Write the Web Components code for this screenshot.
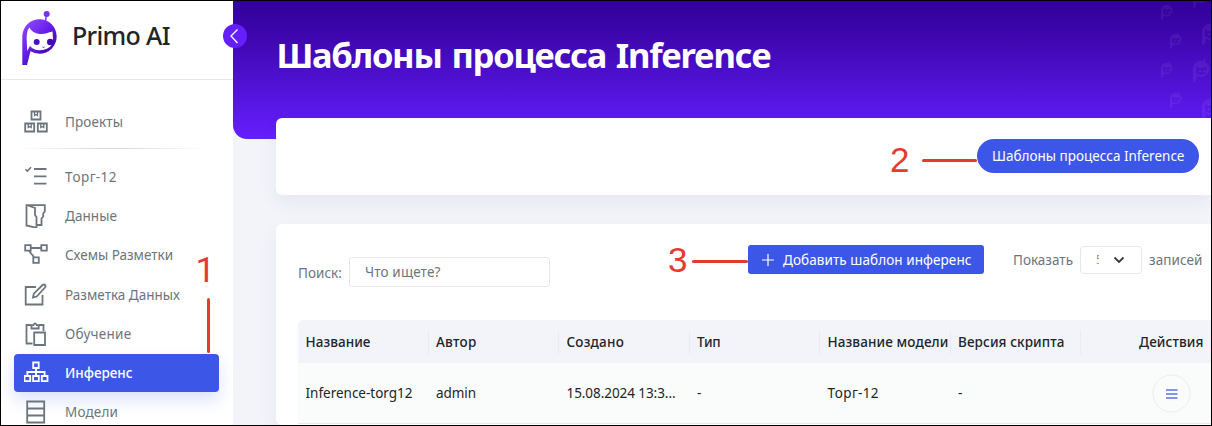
<!DOCTYPE html>
<html lang="ru">
<head>
<meta charset="utf-8">
<title>Primo AI</title>
<style>
html,body{margin:0;height:100%;overflow:hidden}
body{font-family:"Noto Sans","Open Sans",sans-serif;font-size:13.5px;color:#212529}
</style>
</head>
<body>
<primo-app></primo-app>
<script>
const define=(name,html,ready)=>customElements.define(name,class extends HTMLElement{
  connectedCallback(){
    if(this.shadowRoot)return;
    const t=document.createElement('template');
    t.innerHTML=typeof html==='function'?html(this):html;
    this.attachShadow({mode:'open'}).append(t.content.cloneNode(true));
    if(ready)ready(this);
  }
});

/* Single line label; tracking is spread so that the line takes the given width. */
define('fit-text','<style>:host{display:inline-block;white-space:pre;flex:none}</style><slot></slot>',el=>{
  const w=+el.getAttribute('w'),n=el.textContent.length;
  if(w)el.style.letterSpacing=((w-el.getBoundingClientRect().width)/n).toFixed(3)+'px';
});

const icons={
  boxes:'<path d="M7.5 1.5h9v8h-9zM1.200 13.500h9v8h-9zM13.800 13.500h9v8h-9z"/><path stroke-width="1.300" d="M10.500 2v3.500l1.500-1 1.500 1V2M4.200 14v3.500l1.500-1 1.500 1V14M16.800 14v3.500l1.500-1 1.500 1V14"/>',
  list:'<path d="M10 4h12.500M10 11.300h12.500M10 18.600h12.500"/><path stroke-width="1.600" d="M1.500 4.300l1.800 1.800L7 2.300"/>',
  data:'<path d="M12.500 21H17.500V14.500l1.700-2V9.500l1.600-2V1.200H2.500V21.500L12.500 23.800V13l-1.500-2V4L4 1.500"/>',
  schema:'<path d="M1.200 2.200h5.500v5.500H1.200zM17.300 2.200h5.500v5.500h-5.500zM9.300 14.300h5.500v5.500H9.300zM6.700 5h10.600M5 7.700l5.200 6.600"/>',
  edit:'<path d="M12 4H1.700v17.500H18.500V12"/><path d="M9 14.500l.8-3.800L18.500 2q1.500-1 2.500 0t0 2.500L12.700 13.500z"/>',
  clip:'<path d="M8.500 21.500H2.500V3h4.500M15 3H19.500v6"/><path d="M7.500 6.500V3.200h2Q11-.5 12.700 3.200h2v3.300zM10.200 10.500H21V23H10.200z"/>',
  tree:'<path d="M9.200 1.500h5.500v5.500H9.200zM.5 15h5.700v5.200H.5zM9.100 15h5.700v5.200H9.100zM17.800 15h5.700v5.200H17.800zM12 7v8M3.400 15v-4h17.200v4"/>',
  models:'<path d="M3.200 1.500h17v21h-17zM3.200 8.500h17M3.200 15.500h17"/>'
};
define('nav-item',el=>`<style>
:host{display:flex;flex:none;align-items:center;height:37.200px;margin:1px 14px 1px 13px;padding-left:10px;border-radius:4px;color:#6c757d;box-sizing:border-box}
:host([active]){background:#3c57e8;color:#fff;box-shadow:0 8px 16px rgba(60,87,232,.18)}
svg{width:25px;height:24px;margin-right:16px;fill:none;stroke:currentColor;stroke-width:1.800;flex:none}
</style><svg viewBox="0 0 25 24">${icons[el.getAttribute('icon')]}</svg><slot></slot>`);

define('primo-logo',`<style>:host{display:block;width:36px;height:56px}</style>
<svg width="36" height="56" viewBox="0 0 36 56"><defs><linearGradient id="g" x1=".1" y1=".1" x2=".75" y2=".95"><stop stop-color="#8b45ff"/><stop offset=".45" stop-color="#681ee8"/><stop offset="1" stop-color="#3500a5"/></linearGradient></defs>
<path d="M24.500 3.500L23.500 10" stroke="#7631f4" stroke-width="1.500"/><circle cx="24.700" cy="3" r="3" fill="#7531f4"/>
<path fill="url(#g)" fill-rule="evenodd" d="M.3 54V25.500A17.200 17.200 0 0 1 17.500 8.300A17.200 17.200 0 0 1 17.500 42.700Q12.500 42.700 8.500 40.300L5 54zM7.300 16.500Q4.700 20 4.600 27.500L5.200 40L8 35Q12 39.500 17.800 39.300Q26 39 29.700 34L31 28L30.500 20.500L27.500 21.300Q23.500 23.500 17.500 23Q10.500 22 7.300 16.500z"/>
<circle cx="14.700" cy="31" r="3" fill="#4810c4"/><circle cx="28.200" cy="31" r="3.200" fill="#4008b4"/><path d="M20.500 36q1 .8 2 0" stroke="#5020b0" fill="none"/></svg>`);

define('side-bar',`<style>
:host{display:flex;flex-direction:column;width:232px;background:#fff;flex:none;position:relative;z-index:2}
header{display:flex;flex:none;height:78px;border-bottom:1px solid #e8e8e8;padding-left:21px;box-sizing:content-box}
primo-logo{margin-top:10px}
.name{font:500 25px/34px "Noto Sans","Open Sans",sans-serif;margin:17px 0 0 14px}
nav{padding-top:22.500px;display:flex;flex-direction:column;flex:none}
hr{border:0;height:1px;flex:none;margin:6.500px 28px 8.200px 17px;background:linear-gradient(90deg,transparent,#d4d4d4,transparent)}
.toggle{position:absolute;left:222px;top:23px;width:24px;height:24px;border-radius:50%;background:#651fff}
</style>
<header><primo-logo></primo-logo><div class="name"><fit-text w="98">Primo AI</fit-text></div></header>
<nav>
<nav-item icon="boxes"><fit-text w="58">Проекты</fit-text></nav-item><hr>
<nav-item icon="list"><fit-text w="52">Торг-12</fit-text></nav-item>
<nav-item icon="data"><fit-text w="52">Данные</fit-text></nav-item>
<nav-item icon="schema"><fit-text w="108">Схемы Разметки</fit-text></nav-item>
<nav-item icon="edit"><fit-text w="115">Разметка Данных</fit-text></nav-item>
<nav-item icon="clip"><fit-text w="66.500">Обучение</fit-text></nav-item>
<nav-item icon="tree" active><fit-text w="67.500" style="font-weight:500">Инференс</fit-text></nav-item>
<nav-item icon="models"><fit-text w="53">Модели</fit-text></nav-item>
</nav>
<svg class="toggle" viewBox="0 0 24 24"><path d="M14.500 5.500L8 12l6.500 7" fill="none" stroke="#fff" stroke-width="1.300"/></svg>`);

const bot=(x,y,s)=>`<g transform="translate(${x} ${y}) scale(${s})"><path fill-rule="evenodd" d="M0 54V25A17.500 17.500 0 1 1 17 43Q12 43 9 41L5 54zM7 20V34Q11 39 17 39Q26 38 29 33V20Q18 28 7 20z"/><path d="M24 11l1-8" stroke="#fff" stroke-width="3"/><circle cx="15" cy="31" r="3"/><circle cx="25" cy="31" r="3"/></g>`;
define('page-banner',`<style>
:host{display:block;height:138px;flex:none;background:linear-gradient(#320099,#3e06ae 25%,#651fff);border-bottom-left-radius:14px;position:relative;overflow:hidden;box-sizing:border-box;padding:31.500px 0 0 43.500px;color:#fff;font:700 34.500px/44px "Noto Sans","Open Sans",sans-serif;word-spacing:2px}
svg{position:absolute;right:0;top:0}</style><slot></slot>
<svg width="60" height="138" viewBox="1151 1 60 138" fill="#fff" opacity=".06">${bot(1161,2,.33)+bot(1170,31,.33)+bot(1161,60,.33)+bot(1170,90,.33)+bot(1193,-17,.46)+bot(1202,20,.46)+bot(1193,57,.46)+bot(1202,95,.46)}</svg>`);

define('white-card',`<style>:host{display:block;background:#fff;border-radius:6px 0 0 6px;margin-left:43px;box-sizing:border-box;position:relative;box-shadow:0 8px 18px rgba(62,80,150,.07)}</style><slot></slot>`);

define('main-button',`<style>:host{display:flex;align-items:center;background:#3c57e8;color:#fff;border-radius:3px;height:29px;box-sizing:border-box}
:host([pill]){height:34px;border-radius:17px}</style><slot></slot>`);

define('tool-bar',`<style>
:host{display:flex;align-items:flex-start;padding:21px 0 0 22px;height:96px;box-sizing:border-box;color:#6c757d}
.search{display:flex;align-items:center;margin-top:12px;height:30px;width:450px;box-sizing:border-box}
.search>fit-text{margin-top:2px}
.input{width:201px;height:30px;box-sizing:border-box;border:1px solid #e5e7eb;border-radius:3px;margin-left:7px;padding:4px 0 0 15px;line-height:20px}
main-button{width:236px;padding-left:14px}
main-button svg{margin-right:9px}
.size{display:flex;align-items:center;margin-left:29px;height:30px}
.select{width:62px;height:28px;box-sizing:border-box;border:1px solid #e5e7eb;border-radius:4px;margin:-1px 7px 0 7px;display:flex;align-items:center;color:#343a40}
.clip{width:3px;overflow:hidden;margin:0 14px 0 15px;color:#a98f84;font-size:12px;line-height:14px}
</style>
<div class="search"><fit-text w="44">Поиск:</fit-text><div class="input"><fit-text w="75.500">Что ищете?</fit-text></div></div>
<main-button><svg width="12" height="12"><path d="M6 0v12M0 6h12" stroke="#fff" stroke-width="1.200"/></svg><fit-text w="188.500">Добавить шаблон инференс</fit-text></main-button>
<div class="size"><fit-text w="60">Показать</fit-text><div class="select"><div class="clip">5</div><svg width="12" height="8"><path d="M1.500 1.500L6 6l4.500-4.500" fill="none" stroke="#343a40" stroke-width="1.800"/></svg></div><fit-text w="53.500">записей</fit-text></div>`);

define('data-table',`<style>
:host{display:block;margin-left:22px}
.row{display:grid;grid-template-columns:repeat(6,130.500px) 1fr;align-items:center}
.head{height:43px;background:#f3f4f9;font-weight:500;border-top-left-radius:5px}
.body{height:60px;background:#fafcfb;border-bottom:1px solid #e8e8e8}
.row>div{padding-left:7.500px;box-sizing:border-box;white-space:nowrap}
.head>div{height:24px;line-height:24px;border-right:1px solid #eaecf0}
.head>div:last-child{padding-left:58px;border:0}
.row>.act{padding-left:70.500px}
.act svg{display:block}
</style>
<div class="row head"><div><fit-text w="65">Название</fit-text></div><div><fit-text w="40.500">Автор</fit-text></div><div><fit-text w="57.500">Создано</fit-text></div><div><fit-text w="23.500">Тип</fit-text></div><div><fit-text w="121">Название модели</fit-text></div><div><fit-text w="106.500">Версия скрипта</fit-text></div><div><fit-text w="64.500">Действия</fit-text></div></div>
<div class="row body"><div><fit-text w="107">Inference-torg12</fit-text></div><div><fit-text w="40">admin</fit-text></div><div><fit-text w="109">15.08.2024 13:3...</fit-text></div><div>-</div><div><fit-text w="51.500">Торг-12</fit-text></div><div>-</div><div class="act"><svg width="39" height="39"><circle cx="19.500" cy="19.500" r="18.500" fill="none" stroke="#ebedee"/><path d="M14 16h11.500M14 20h11.500M14 24h11.500" stroke="#5b72ed" stroke-width="1.300"/></svg></div></div>`);

/* Numbered callouts lie freely over the page. */
define('call-outs',`<style>
:host{position:absolute;inset:0;z-index:5;color:#e63a30;font:35px/40px "Liberation Sans",Arial,sans-serif}
span,i{position:absolute}i{background:#e63a30;border-radius:2px}
</style>
<span style="left:194.500px;top:249.500px;font-family:Roboto,sans-serif">1</span><i style="left:205.500px;top:297px;width:3px;height:55px"></i>
<span style="left:889px;top:139px">2</span><i style="left:921px;top:158px;width:55px;height:3px"></i>
<span style="left:667px;top:239px">3</span><i style="left:691px;top:259px;width:56px;height:3px"></i>`);

define('primo-app',`<style>
:host{display:flex;position:relative;width:1212px;height:426px;box-sizing:border-box;border:1px solid #000;overflow:hidden;background:#f3f4f9}
main{flex:1;min-width:0;display:flex;flex-direction:column}
.top{height:77px;margin-top:-21px;display:flex;justify-content:flex-end;padding:21px 12px 0 0;flex:none}
.list{margin-top:29px;flex:1}
main-button{width:222px;padding-left:15px}
</style>
<side-bar></side-bar>
<main>
<page-banner><fit-text w="494">Шаблоны процесса Inference</fit-text></page-banner>
<white-card class="top"><main-button pill><fit-text w="192.500">Шаблоны процесса Inference</fit-text></main-button></white-card>
<white-card class="list"><tool-bar></tool-bar><data-table></data-table></white-card>
</main>
<call-outs></call-outs>`);
</script>
</body>
</html>
